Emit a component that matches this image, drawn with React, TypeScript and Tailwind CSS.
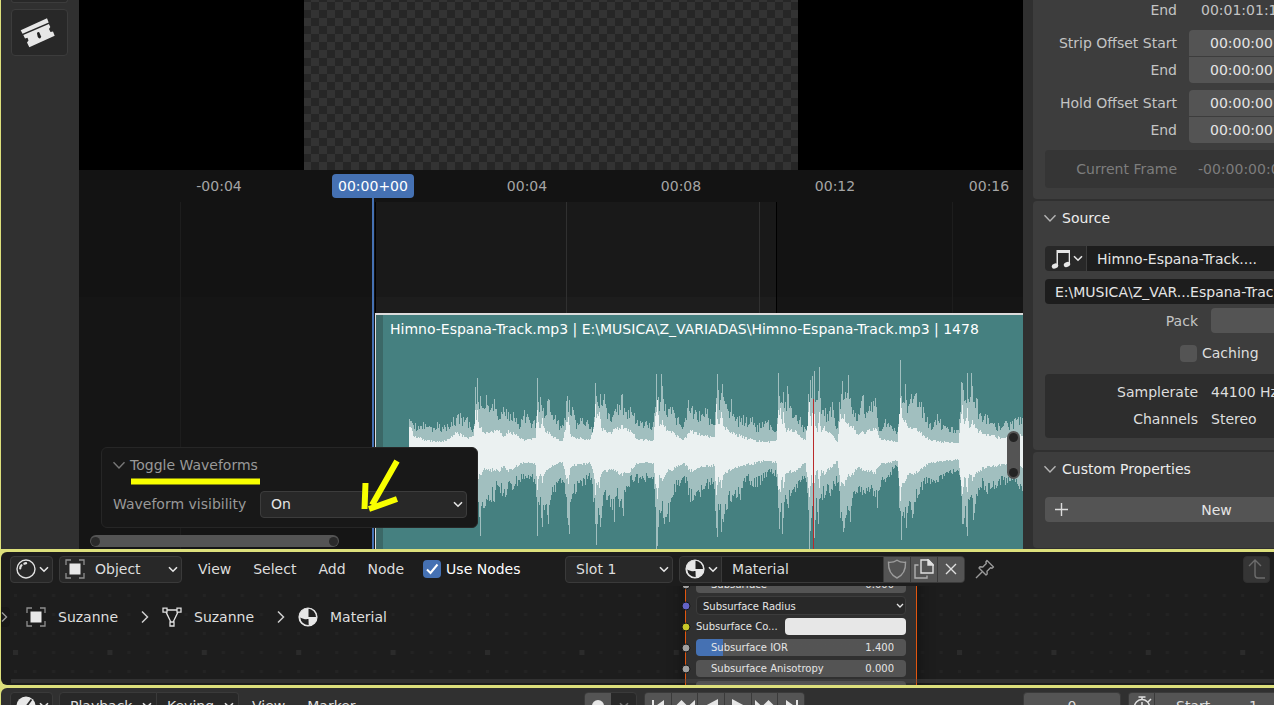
import type { ReactNode } from 'react';
import { clsx } from 'clsx';

type Point = [number, number];

// envelope control points: [pixel offset in the strip, height from the centre line]
const OUTER_UP: Point[] = [
    [34, 33], [38, 27], [48, 30], [55, 25], [62, 30], [70, 25], [78, 35], [83, 38], [92, 35], [97, 20], [99, 28], [100, 65], [101, 48], [102, 74],
    [103, 50], [105, 56], [107, 44], [111, 57], [113, 46], [117, 48], [119, 53], [123, 32], [128, 45], [138, 40], [143, 28], [149, 42], [157, 28],
    [161, 36], [162, 74], [163, 50], [165, 55], [168, 44], [173, 53], [180, 37], [187, 27], [192, 56], [194, 52], [197, 45], [200, 32], [207, 34],
    [212, 32], [218, 25], [219, 35], [220, 69], [221, 56], [222, 50], [225, 58], [227, 46], [229, 58], [231, 44], [238, 37], [247, 58], [249, 44],
    [255, 45], [262, 32], [270, 30], [278, 30], [280, 45], [281, 78], [283, 55], [285, 50], [286, 78], [287, 66], [288, 53], [298, 42], [303, 35],
    [308, 25], [313, 52], [320, 42], [332, 43], [338, 27], [340, 40], [342, 78], [343, 62], [345, 52], [347, 68], [350, 48], [355, 40], [356, 53],
    [358, 38], [362, 35], [377, 35], [382, 27], [393, 32], [400, 20], [402, 34], [403, 79], [404, 56], [406, 50], [408, 60], [410, 50], [412, 66],
    [415, 46], [425, 35], [430, 23], [432, 26], [433, 58], [435, 72], [436, 54], [437, 76], [438, 50], [439, 81], [440, 50], [442, 52], [444, 85],
    [445, 54], [447, 42], [450, 44], [452, 38], [457, 50], [459, 34], [462, 24], [464, 50], [466, 58], [467, 71], [468, 52], [470, 60], [473, 77],
    [475, 54], [478, 42], [483, 38], [488, 57], [491, 40], [496, 50], [500, 54], [502, 34], [503, 25], [510, 33], [515, 27], [522, 20], [524, 35],
    [525, 92], [526, 56], [528, 50], [530, 68], [531, 52], [536, 58], [540, 58], [544, 50], [548, 45], [557, 23], [562, 38], [568, 27], [582, 22],
    [585, 40], [586, 70], [588, 62], [590, 52], [592, 79], [594, 50], [596, 79], [597, 66], [599, 50], [602, 53], [604, 38], [610, 38], [618, 28],
    [635, 30], [643, 35], [647, 34], [648, 44],
];

const INNER_UP: Point[] = [
    [34, 25], [36, 24], [38, 16], [45, 15], [50, 12], [70, 11], [80, 20], [86, 18], [92, 14], [98, 16], [100, 42], [101, 32], [102, 42], [104, 24],
    [106, 25], [108, 20], [124, 22], [128, 15], [133, 22], [143, 16], [150, 12], [160, 14], [162, 42], [163, 30], [165, 24], [167, 34], [169, 24],
    [175, 18], [187, 11], [191, 30], [193, 35], [195, 18], [198, 15], [215, 13], [219, 30], [220, 48], [221, 34], [224, 40], [226, 24], [235, 20],
    [247, 27], [255, 22], [262, 13], [278, 12], [280, 36], [282, 52], [284, 26], [287, 32], [292, 22], [298, 20], [308, 12], [315, 22], [330, 17],
    [339, 15], [341, 48], [343, 28], [346, 40], [348, 26], [356, 20], [370, 15], [390, 10], [401, 12], [403, 42], [405, 44], [407, 28], [408, 40],
    [410, 24], [420, 22], [430, 12], [433, 40], [434, 50], [436, 26], [438, 50], [440, 26], [442, 20], [444, 40], [446, 20], [449, 26], [456, 18],
    [462, 10], [465, 38], [467, 34], [469, 38], [472, 28], [478, 26], [482, 18], [492, 22], [500, 24], [505, 14], [522, 10], [524, 38], [525, 54],
    [527, 34], [530, 32], [532, 26], [540, 24], [555, 12], [583, 9], [586, 38], [587, 47], [589, 28], [592, 44], [594, 24], [597, 32], [600, 24],
    [610, 18], [630, 14], [648, 18],
];

const OUTER_DOWN: Point[] = [
    [34, 28], [98, 30], [103, 50], [105, 84], [106, 54], [109, 56], [115, 48], [119, 50], [120, 38], [130, 45], [137, 38], [145, 30], [158, 30],
    [161, 45], [162, 84], [163, 50], [166, 66], [167, 75], [169, 58], [173, 72], [175, 48], [180, 40], [187, 28], [190, 42], [192, 66], [194, 82],
    [195, 50], [200, 42], [215, 28], [218, 50], [221, 93], [223, 56], [225, 75], [227, 54], [232, 48], [237, 58], [239, 70], [241, 44], [248, 64],
    [250, 40], [258, 30], [270, 30], [278, 25], [280, 55], [281, 98], [282, 94], [284, 58], [289, 72], [294, 70], [296, 46], [300, 40], [308, 25],
    [315, 50], [325, 45], [338, 30], [341, 76], [342, 85], [344, 58], [346, 80], [348, 70], [351, 58], [356, 50], [365, 48], [370, 30], [382, 35],
    [395, 20], [401, 25], [404, 77], [405, 60], [407, 82], [409, 50], [413, 56], [415, 44], [420, 40], [425, 30], [431, 30], [434, 98], [436, 66],
    [438, 70], [439, 86], [441, 46], [443, 72], [445, 46], [455, 44], [460, 34], [463, 30], [465, 66], [468, 80], [470, 66], [473, 58], [475, 70],
    [477, 46], [480, 42], [490, 42], [498, 44], [502, 56], [504, 38], [510, 30], [522, 15], [524, 56], [526, 88], [528, 60], [531, 76], [533, 54],
    [537, 66], [540, 50], [550, 32], [562, 30], [580, 20], [585, 28], [587, 72], [589, 66], [592, 84], [594, 48], [598, 68], [600, 52], [605, 35],
    [612, 42], [625, 33], [640, 30], [648, 42],
];

const INNER_DOWN: Point[] = INNER_UP.map(([x, h]) => [x, Math.round(h * 0.9)]);

const noise = (n: number) => {
    const v = Math.sin(n * 127.1) * 43758.5453;
    return v - Math.floor(v);
};

// control points are kept as they are, columns between them get some noise
const heightAt = (points: Point[], x: number, seed: number, jitter: number) => {
    const i = points.findIndex(([px]) => px >= x);
    if (i <= 0 || points[i][0] === x) return points[Math.max(i, 0)][1];
    const [x0, h0] = points[i - 1];
    const [x1, h1] = points[i];
    const h = h0 + ((h1 - h0) * (x - x0)) / (x1 - x0);
    return h * (1.05 - noise(x + seed) * jitter);
};

const CENTER = 139;

const wavePath = (up: Point[], down: Point[], jitter: number) => {
    let d = '';
    for (let x = 34; x < 648; x++) {
        const top = Math.round(CENTER - heightAt(up, x, 0, jitter));
        const bottom = Math.round(CENTER + heightAt(down, x, 900, jitter));
        d += `M${x} ${top}h1V${bottom}h-1z`;
    }
    return d;
};

const Waveform = () => (
    <svg width="648" height="236" viewBox="0 0 648 236" shapeRendering="crispEdges" className="block">
        <path d={wavePath(OUTER_UP, OUTER_DOWN, 0.34)} fill="#a1bfbf" />
        <path d={wavePath(INNER_UP, INNER_DOWN, 0.2)} fill="#ebf1f1" />
        <path d="M438 86h1v150h-1z" fill="#b92a2a" />
    </svg>
);

const Chevron = ({ className = '' }: { className?: string }) => (
    <svg width="10" height="7" viewBox="0 0 10 7" fill="none" stroke="#e5e5e5" strokeWidth="1.6" className={clsx('pointer-events-none', className)}>
        <path d="M1 1.2 5 5.2 9 1.2" />
    </svg>
);

const PanelArrow = ({ stroke }: { stroke: string }) => (
    <svg width="14" height="9" viewBox="0 0 14 9" fill="none" stroke={stroke} strokeWidth="1.4">
        <path d="M1.5 1.2 7 7 12.5 1.2" />
    </svg>
);

const BreadcrumbArrow = () => (
    <svg width="8" height="14" viewBox="0 0 8 14" fill="none" stroke="#cfcfcf" strokeWidth="1.5">
        <path d="M1 1.5 6.5 7 1 12.5" />
    </svg>
);

const BladeIcon = () => (
    <svg width="36" height="32" viewBox="0 0 36 32" fill="#e6e6e6">
        <path d="M.7 13.300 27 1.300 28.700 5.600 2.500 16.700z" />
        <path d="M3.300 18 28.900 7 30.300 10 29 12 30.500 15 33 14.500 34.700 18.700 9.300 30.200 7 25.500 8.500 23.500 7.500 20.800 5 21.500z" />
        <path d="M17 16.200q.6-1.600 2.200-1l1.800 4q.2 2.200-1.500 2.200-1.300-.2-1.800-1.600z" fill="#202020" />
    </svg>
);

const ObjectIcon = () => (
    <svg width="20" height="20" viewBox="0 0 20 20">
        <path d="M1 6V1h5M14 1h5v5M19 14v5h-5M6 19H1v-5" fill="none" stroke="#8f8f8f" strokeWidth="1.3" />
        <path d="M4.5 4.5h11v11h-11z" fill="#e8e8e8" />
    </svg>
);

const MeshIcon = () => (
    <svg width="20" height="20" viewBox="0 0 20 20" fill="none" stroke="#e0e0e0" strokeWidth="1.3">
        <path d="M1 1.2h4v4H1zM15 1.2h4v4h-4zM8 15h4v4H8zM5 3h10M4.2 5.4 8.8 15M15.8 5.4 11.2 15" />
    </svg>
);

const MaterialIcon = () => (
    <svg width="20" height="20" viewBox="0 0 20 20">
        <circle cx="10" cy="10" r="9" fill="#e8e8e8" />
        <path d="M10.5 1.8V10H18a8 8 0 0 0-7.500-8.200zM2.300 10.500c2.600 1.700 5.400 1.900 8.200 1.600l.2 6a8 8 0 0 1-8.400-7.600z" fill="#222" />
        <circle cx="10" cy="10" r="9" fill="none" stroke="#e8e8e8" strokeWidth="1.2" />
    </svg>
);

const ShaderIcon = () => (
    <svg width="20" height="20" viewBox="0 0 20 20" fill="none" stroke="#e0e0e0" strokeWidth="1.4">
        <circle cx="10" cy="10" r="9" />
        <path d="M4.200 9.500Q4.200 7.500 5.500 6.200" strokeWidth="2.200" strokeLinecap="round" />
        <path d="M8.500 4.600 10 4.200" strokeWidth="2.400" strokeLinecap="round" />
    </svg>
);

const ClockIcon = () => (
    <svg width="20" height="20" viewBox="0 0 20 20">
        <circle cx="10" cy="10" r="9.500" fill="#e8e8e8" />
        <path d="M15.500 3.500 10 11" stroke="#282828" strokeWidth="1.800" />
    </svg>
);

const MusicIcon = () => (
    <svg width="20" height="20" viewBox="0 0 20 20" fill="#e6e6e6">
        <path d="M5.500 1H19v14.500h-1.300V4H7V17H5.500z" />
        <ellipse cx="4" cy="17" rx="3.300" ry="2.500" transform="rotate(-20 4 17)" />
        <ellipse cx="16" cy="15.500" rx="3.300" ry="2.500" transform="rotate(-20 16 15.500)" />
    </svg>
);

const ShieldIcon = () => (
    <svg width="20" height="20" viewBox="0 0 20 20" fill="none" stroke="#9c9c9c" strokeWidth="1.400">
        <path d="M10 1.200C7.500 3 4.500 3.500 1.500 3.300 1.200 10 2.500 15.500 10 19 17.500 15.500 18.800 10 18.500 3.300 15.500 3.500 12.500 3 10 1.200z" />
    </svg>
);

const CopyIcon = () => (
    <svg width="20" height="20" viewBox="0 0 20 20" fill="none" stroke="#e0e0e0" strokeWidth="1.400">
        <path d="M14.500 1H7v13h12V5.500z" />
        <path d="M14 1v5h5z" fill="#e0e0e0" />
        <path d="M4.500 6H1v13h12v-2.500" stroke="#b0b0b0" />
    </svg>
);

const CloseIcon = () => (
    <svg width="12" height="12" viewBox="0 0 12 12" fill="none" stroke="#dedede" strokeWidth="1.400">
        <path d="M1 1l10 10M11 1 1 11" />
    </svg>
);

const PinIcon = () => (
    <svg width="20" height="20" viewBox="0 0 20 20" fill="none" stroke="#9a9a9a" strokeWidth="1.400" strokeLinejoin="round">
        <path d="M12 1.500 18.500 8 17 9.200 15.500 8.800 12 12.300 12.200 15 11 16 4 9 5 7.800 7.800 8 11.300 4.600 10.900 3zM7.500 12.500 1 19" />
    </svg>
);

const ParentIcon = () => (
    <svg width="20" height="22" viewBox="0 0 20 22" fill="none" stroke="#6c6c6c" strokeWidth="1.400" className="shrink-0">
        <path d="M2 8 8 2l6 6M8 2v15q0 3 3 3h7" />
    </svg>
);

const PlusIcon = () => (
    <svg width="13" height="13" viewBox="0 0 13 13" stroke="#dcdcdc" strokeWidth="1.400">
        <path d="M6.500 0v13M0 6.500h13" />
    </svg>
);

const StopwatchIcon = () => (
    <svg width="20" height="20" viewBox="0 0 20 20" fill="none" stroke="#e0e0e0" strokeWidth="1.500">
        <circle cx="10" cy="11" r="7.500" />
        <path d="M6.500 1h7M10 1v3M10 6v5M16 6l3-3" />
    </svg>
);

const ANNOTATION = '#f8ff00';

type FieldProps = { id: string; label: string; value: string; className?: string };

const TimeField = ({ id, label, value, className }: FieldProps) => (
    <div className="flex h-[26px] items-center gap-3">
        <label htmlFor={id} className="w-[144px] text-right text-[#c4c4c4]">{label}</label>
        <input
            id={id}
            defaultValue={value}
            className={clsx('h-full min-w-0 flex-1 bg-[#545454] pl-[21px] text-[#e5e5e5]', className)}
        />
    </div>
);

const PanelTitle = ({ children }: { children: ReactNode }) => (
    <button className="flex h-[34px] items-center gap-[5px] pl-[10px] text-[#ececec]">
        <PanelArrow stroke="#b5b5b5" />
        {children}
    </button>
);

const Sidebar = () => (
    <aside className="w-[251px] shrink-0 overflow-hidden bg-[#303030] pl-[10px]">
        <div className="flex h-full w-[368px] flex-col gap-[2px]">
            <section className="h-[199px] rounded-bl bg-[#3d3d3d]">
                <div className="flex h-5 items-center gap-6">
                    <span className="w-[144px] text-right text-[#c4c4c4]">End</span>
                    <span className="text-[#c4c4c4]">00:01:01:12</span>
                </div>
                <div className="mt-[10px] flex flex-col gap-px">
                    <TimeField id="strip-start" label="Strip Offset Start" value="00:00:00+00" className="rounded-tl" />
                    <TimeField id="strip-end" label="End" value="00:00:00+00" className="rounded-bl" />
                </div>
                <div className="mt-[7px] flex flex-col gap-px">
                    <TimeField id="hold-start" label="Hold Offset Start" value="00:00:00+00" className="rounded-tl" />
                    <TimeField id="hold-end" label="End" value="00:00:00+00" className="rounded-bl" />
                </div>
                <div className="mt-[7px] ml-3 flex h-[38px] items-center gap-[21px] rounded bg-[#353535] text-[#7d7d7d]">
                    <span className="w-[132px] text-right">Current Frame</span>
                    <span>-00:00:00:01</span>
                </div>
            </section>

            <section className="h-[249px] rounded-l bg-[#3d3d3d]">
                <PanelTitle>Source</PanelTitle>
                <div className="mt-[11px] ml-3 flex h-[25px] overflow-hidden rounded">
                    <button aria-label="Browse sound" className="flex w-[41px] items-center gap-[2px] bg-[#282828] pl-[6px]">
                        <MusicIcon />
                        <Chevron />
                    </button>
                    <input aria-label="Sound name" defaultValue="Himno-Espana-Track...." className="ml-px min-w-0 flex-1 bg-[#1d1d1d] pl-[10px] text-[#e5e5e5]" />
                </div>
                <div className="mt-2 ml-3 flex h-[25px] overflow-hidden rounded">
                    <input aria-label="File path" defaultValue="E:\MUSICA\Z_VAR...Espana-Track.mp3" className="min-w-0 flex-1 bg-[#1d1d1d] pl-[10px] text-[#e5e5e5]" />
                </div>
                <div className="mt-1 flex h-[25px] items-center gap-[13px]">
                    <span className="w-[165px] text-right text-[#c4c4c4]">Pack</span>
                    <button aria-label="Pack" className="h-full flex-1 rounded bg-[#545454]" />
                </div>
                <label className="mt-[7px] ml-[147px] flex h-[26px] items-center gap-[5px] text-[#dedede]">
                    <input type="checkbox" className="h-[17px] w-[17px] appearance-none rounded-sm bg-[#545454]" />
                    Caching
                </label>
                <dl className="mt-2 ml-3 grid h-16 grid-cols-[153px_1fr] content-center gap-x-[13px] rounded bg-[#2d2d2d] text-[#dedede]">
                    <dt className="text-right leading-[27px]">Samplerate</dt>
                    <dd className="leading-[27px]">44100 Hz</dd>
                    <dt className="text-right leading-[27px]">Channels</dt>
                    <dd className="leading-[27px]">Stereo</dd>
                </dl>
            </section>

            <section className="h-24 rounded-l bg-[#3d3d3d]">
                <PanelTitle>Custom Properties</PanelTitle>
                <button className="mt-[11px] ml-3 flex h-[25px] w-[344px] items-center rounded bg-[#545454] pl-[10px] text-[#e5e5e5]">
                    <PlusIcon />
                    <span className="flex-1 pr-6 text-center">New</span>
                </button>
            </section>
        </div>
    </aside>
);

const RULER = ['-00:04', '00:00+00', '00:04', '00:08', '00:12', '00:16'];

const OperatorPanel = () => (
    <div className="absolute top-[277px] left-[22px] h-[81px] w-[377px] rounded-md border border-[#262626] bg-[#181818] px-[10px] text-[#999]">
        <button className="flex h-[34px] items-center gap-1">
            <PanelArrow stroke="#777" />
            Toggle Waveforms
        </button>
        <div className="flex h-11 items-center justify-between pl-px">
            <label htmlFor="visibility">Waveform visibility</label>
            <div className="relative flex h-[27px] w-[207px] items-center">
                <select id="visibility" className="h-full w-full appearance-none rounded border border-[#3c3c3c] bg-[#282828] pl-[10px] text-[#e5e5e5]">
                    <option>On</option>
                    <option>Off</option>
                </select>
                <Chevron className="absolute right-1" />
            </div>
        </div>
        <svg width="280" height="60" viewBox="0 0 280 60" className="pointer-events-none absolute top-[8px] left-[28px]" fill="none" stroke={ANNOTATION} strokeWidth="6">
            <path d="M1 25.500h129" />
            <path d="M267 5 242 49M235.500 27 234.500 53M239 53 267 43" />
        </svg>
    </div>
);

const Timeline = () => (
    <div className="relative h-[379px] shrink-0 overflow-hidden bg-[#131313]">
        <div className="flex h-8 items-center pl-[63px] text-[#a5a5a5]">
            {RULER.map((time) => (
                <div key={time} className="flex w-[154px] shrink-0 justify-center">
                    <span className={clsx(time === '00:00+00' && 'z-10 rounded bg-[#4571b3] px-[6px] leading-6 text-white')}>{time}</span>
                </div>
            ))}
        </div>

        {/* channels and the frame range */}
        <div className="absolute inset-x-0 top-[127px] bottom-0 bg-[#151515]" />
        <div className="absolute top-8 bottom-0 left-[296px] w-[402px] border-x border-black bg-[#191919]">
            <div className="mt-[95px] h-full bg-[#1d1d1d]" />
        </div>
        <div className="absolute top-8 bottom-0 left-[101px] w-px bg-[#1d1d1d]" />
        <div className="absolute top-8 bottom-0 left-[487px] w-px bg-[#303030]" />
        <div className="absolute top-8 bottom-0 left-[680px] w-px bg-[#303030]" />
        <div className="absolute top-8 bottom-0 left-[873px] w-px bg-[#1d1d1d]" />

        {/* sound strip */}
        <div className="absolute top-[143px] right-0 bottom-0 left-[296px] overflow-hidden border-t-2 border-l border-[#dcdcdc] bg-[#458080]">
            <div className="absolute inset-y-0 left-0 w-[7px] bg-[#3b6867]" />
            <div className="absolute -top-[2px] -left-px">
                <Waveform />
            </div>
            <p className="relative pt-[3px] pl-[14px] leading-[22px] whitespace-nowrap text-white">
                Himno-Espana-Track.mp3 | E:\MUSICA\Z_VARIADAS\Himno-Espana-Track.mp3 | 1478
            </p>
        </div>
        <div className="absolute top-7 bottom-0 left-[293px] w-[2px] bg-[#4571b3]" />

        <div className="absolute top-[261px] right-[3px] flex h-12 w-[13px] flex-col justify-between rounded-full bg-[#545454] p-[2px]">
            <span className="h-[9px] rounded-full bg-[#242424]" />
            <span className="h-[9px] rounded-full bg-[#242424]" />
        </div>
        <div className="absolute bottom-[2px] left-[11px] flex h-3 w-[249px] items-center justify-between rounded-full bg-[#545454] px-px">
            <span className="h-[9px] w-[9px] rounded-full bg-[#2a2a2a]" />
            <span className="h-[9px] w-[9px] rounded-full bg-[#2a2a2a]" />
        </div>
        <OperatorPanel />
    </div>
);

const Sequencer = () => (
    <div className="flex min-h-0 flex-1">
        <nav className="w-[78px] shrink-0 bg-[#303030] pl-[10px]">
            <div className="h-[3px] w-[57px] rounded-b border border-t-0 border-[#3c3c3c] bg-[#282828]" />
            <button aria-label="Blade" className="mt-[6px] flex h-[47px] w-[57px] items-center justify-center rounded border border-[#3c3c3c] bg-[#282828] pr-1">
                <BladeIcon />
            </button>
        </nav>
        <main className="flex min-w-0 flex-1 flex-col">
            <div className="flex min-h-0 flex-1 justify-center bg-black">
                <div className="w-[494px] bg-[repeating-conic-gradient(#262626_0_25%,#333333_0_50%)] bg-size-[16px_16px] bg-position-[7px_10px]" />
            </div>
            <Timeline />
        </main>
        <Sidebar />
    </div>
);

const Box = ({ label, className, children }: { label: string; className: string; children: ReactNode }) => (
    <button aria-label={label} className={clsx('flex h-[27px] shrink-0 items-center rounded border border-[#3a3a3a] bg-[#282828]', className)}>
        {children}
    </button>
);

const NodeGrid = () => (
    <svg width="100%" height="99" className="absolute inset-0">
        <defs>
            <pattern id="grid" x="12" y="8" width="94.4" height="95" patternUnits="userSpaceOnUse">
                {[0, 1, 2, 3, 4].map((row) =>
                    [0, 1, 2, 3, 4].map((col) => <path key={`${row}-${col}`} d={`M${Math.round(col * 18.9) + 1} ${row * 19}h3v3h-3z`} fill="#232323" />)
                )}
                <path d="M0 56h5v5H0z" fill="#2b2b2b" />
            </pattern>
        </defs>
        <rect width="100%" height="99" fill="url(#grid)" />
    </svg>
);

const Socket = ({ color }: { color: string }) => (
    <svg width="10" height="10" viewBox="0 0 10 10" className="absolute -left-[5px]">
        <circle cx="5" cy="5" r="4" fill={color} stroke="#151515" />
    </svg>
);

const NodeRow = ({ color, children }: { color: string; children: ReactNode }) => (
    <div className="relative flex h-[21px] items-center pr-[10px] pl-[10px]">
        <Socket color={color} />
        {children}
    </div>
);

const NodeValue = ({ label, value, fill }: { label: string; value: string; fill?: boolean }) => (
    <div className={clsx('flex h-[17px] w-full items-center justify-between rounded-sm pr-3 pl-[15px]', fill ? 'bg-linear-to-r from-[#4571b3] from-13% to-[#545454] to-13%' : 'bg-[#545454]')}>
        <label htmlFor={label}>{label}</label>
        <input id={label} defaultValue={value} className="w-12 bg-transparent text-right" />
    </div>
);

const ShaderNode = () => (
    <div className="absolute -top-[12px] left-[684px] w-[232px] border-x border-[#e2560f] bg-[#303030] text-[10px] text-[#e5e5e5] shadow-[0_0_10px_4px_#161616]">
        <NodeRow color="#a1a1a1"><NodeValue label="Subsurface" value="0.000" /></NodeRow>
        <NodeRow color="#6363c7">
            <select aria-label="Subsurface Radius" className="h-[19px] w-full appearance-none rounded-sm border border-[#3c3c3c] bg-[#282828] pl-[6px]">
                <option>Subsurface Radius</option>
            </select>
            <svg width="8" height="6" viewBox="0 0 8 6" fill="none" stroke="#e5e5e5" strokeWidth="1.300" className="pointer-events-none absolute right-3">
                <path d="M1 1 4 4 7 1" />
            </svg>
        </NodeRow>
        <NodeRow color="#c7c729">
            <span className="flex-1">Subsurface Co...</span>
            <button aria-label="Subsurface Color" className="h-[17px] w-[121px] rounded-sm bg-[#e7e7e7]" />
        </NodeRow>
        <NodeRow color="#a1a1a1"><NodeValue label="Subsurface IOR" value="1.400" fill /></NodeRow>
        <NodeRow color="#a1a1a1"><NodeValue label="Subsurface Anisotropy" value="0.000" /></NodeRow>
        <NodeRow color="#a1a1a1"><NodeValue label="Metallic" value="0.000" /></NodeRow>
    </div>
);

const NodeEditor = () => (
    <div className="flex h-[133px] shrink-0 flex-col overflow-hidden rounded-l-md bg-[#1d1d1d] text-[#dedede]">
        <header className="flex h-[34px] shrink-0 items-center pr-1 pl-[9px]">
            <Box label="Editor type" className="w-[43px] gap-[3px] pl-[5px]"><ShaderIcon /><Chevron /></Box>
            <div className="relative ml-[6px] flex h-[27px] w-[123px] items-center">
                <select aria-label="Shader type" className="h-full w-full appearance-none rounded border border-[#3a3a3a] bg-[#282828] pl-[35px]">
                    <option>Object</option>
                </select>
                <span className="pointer-events-none absolute left-[6px]"><ObjectIcon /></span>
                <Chevron className="absolute right-1" />
            </div>
            <nav className="ml-4 flex gap-[22px]">
                <button>View</button>
                <button>Select</button>
                <button>Add</button>
                <button>Node</button>
            </nav>
            <label className="ml-[19px] flex w-[142px] shrink-0 items-center gap-[5px] text-white">
                <span className="relative flex">
                    <input type="checkbox" defaultChecked className="h-[18px] w-[18px] appearance-none rounded-sm bg-[#4571b3]" />
                    <svg width="18" height="18" viewBox="0 0 18 18" fill="none" stroke="#fff" strokeWidth="2" className="pointer-events-none absolute inset-0">
                        <path d="M4 9.500 7.500 13 14.500 4.500" />
                    </svg>
                </span>
                Use Nodes
            </label>
            <div className="relative flex h-[27px] w-[108px] shrink-0 items-center">
                <select aria-label="Slot" className="h-full w-full appearance-none rounded border border-[#3a3a3a] bg-[#282828] pl-[10px]">
                    <option>Slot 1</option>
                </select>
                <Chevron className="absolute right-1" />
            </div>
            <div className="ml-[6px] flex h-[27px] w-[286px] shrink-0 gap-px overflow-hidden rounded border border-[#3a3a3a] bg-[#3a3a3a]">
                <button aria-label="Browse material" className="flex w-[41px] items-center gap-[3px] bg-[#282828] pl-[5px]"><MaterialIcon /><Chevron /></button>
                <input aria-label="Material name" defaultValue="Material" className="min-w-0 flex-1 bg-[#1d1d1d] pl-[10px]" />
                <button aria-label="Fake user" className="flex w-[26px] items-center justify-center bg-[#545454]"><ShieldIcon /></button>
                <button aria-label="New material" className="flex w-[26px] items-center justify-center bg-[#545454]"><CopyIcon /></button>
                <button aria-label="Unlink" className="flex w-[26px] items-center justify-center bg-[#545454]"><CloseIcon /></button>
            </div>
            <button aria-label="Pin" className="ml-[10px]"><PinIcon /></button>
            <button aria-label="Parent node tree" className="ml-auto flex h-[27px] w-[27px] items-center justify-center rounded border border-[#303030] bg-[#353535]"><ParentIcon /></button>
        </header>
        <div className="relative flex-1 overflow-hidden">
            <NodeGrid />
            <ShaderNode />
            <div className="absolute inset-x-0 bottom-[2px] ml-[10px] h-1 bg-[#505050]/40" />
            <div className="relative flex h-[62px] w-[400px] items-center">
                <svg width="9" height="26" viewBox="0 0 9 26" className="shrink-0">
                    <path d="M0 3h4q5 0 5 5v10q0 5-5 5H0z" fill="#191919" />
                    <path d="M1 8.500 5.500 13 1 17.500" fill="none" stroke="#9a9a9a" strokeWidth="1.400" />
                </svg>
                <div className="ml-4 flex w-[115px] items-center gap-3"><ObjectIcon />Suzanne</div>
                <BreadcrumbArrow />
                <div className="ml-[13px] flex w-[115px] items-center gap-3"><MeshIcon />Suzanne</div>
                <BreadcrumbArrow />
                <div className="ml-[13px] flex items-center gap-3"><MaterialIcon />Material</div>
            </div>
        </div>
    </div>
);

const TRANSPORT = [
    { label: 'Jump to start', path: 'M4 4h2v13H4zM16 4v13L7 10.500z' },
    { label: 'Previous keyframe', path: 'M0 10.500 6.500 4 13 10.500 6.500 17zM20 4v13l-7-6.500z' },
    { label: 'Play reversed', path: 'M17 3v15L3 10.500z' },
    { label: 'Play', path: 'M4 3v15l14-7.500z' },
    { label: 'Next keyframe', path: 'M20 10.500 13.500 4 7 10.500 13.500 17zM0 4v13l7-6.500z' },
    { label: 'Jump to end', path: 'M15 4h2v13h-2zM5 4v13l9-6.500z' },
];

const TimelineHeader = () => (
    <footer className="flex h-[17px] shrink-0 items-start overflow-hidden rounded-tl-md bg-[#303030] pt-1 pl-[9px] text-[#dedede]">
        <Box label="Editor type" className="w-[43px] gap-[3px] pl-[5px]"><ClockIcon /><Chevron /></Box>
        <Box label="Playback" className="ml-[6px] w-[98px] justify-between rounded-r-none pr-1 pl-[10px]">Playback<Chevron /></Box>
        <Box label="Keying" className="w-[82px] justify-between rounded-l-none border-l-0 pr-1 pl-[10px]">Keying<Chevron /></Box>
        <button className="ml-[13px] h-[27px]">View</button>
        <button className="ml-[22px] h-[27px]">Marker</button>
        <div className="ml-auto flex h-[27px] w-[53px] shrink-0 overflow-hidden rounded border border-[#3a3a3a] bg-[#282828]">
            <button aria-label="Auto keying" className="flex w-[26px] items-center justify-center bg-[#545454]">
                <span className="h-3 w-3 rounded-full bg-[#e6e6e6]" />
            </button>
            <button aria-label="Keying mode" className="flex flex-1 items-center justify-center opacity-40"><Chevron /></button>
        </div>
        <div className="ml-[7px] flex h-[27px] w-[161px] shrink-0 gap-px overflow-hidden rounded border border-[#3a3a3a] bg-[#3a3a3a]">
            {TRANSPORT.map(({ label, path }) => (
                <button key={label} aria-label={label} className="flex flex-1 items-center justify-center bg-[#545454]">
                    <svg width="20" height="20" viewBox="0 0 20 20" fill="#e6e6e6" className="shrink-0"><path d={path} /></svg>
                </button>
            ))}
        </div>
        <input aria-label="Current frame" defaultValue="0" className="ml-[218px] h-[27px] w-[98px] shrink-0 rounded border border-[#3a3a3a] bg-[#545454] text-center" />
        <div className="ml-[7px] flex h-[27px] w-[146px] shrink-0 gap-px overflow-hidden rounded-l border border-r-0 border-[#3a3a3a] bg-[#3a3a3a]">
            <button aria-label="Preview range" className="flex w-[25px] items-center justify-center bg-[#545454]"><StopwatchIcon /></button>
            <div className="flex flex-1 items-center justify-between bg-[#545454] pr-4 pl-[21px]">
                <label htmlFor="start-frame">Start</label>
                <input id="start-frame" defaultValue="1" className="w-8 bg-transparent text-right" />
            </div>
        </div>
    </footer>
);

const App = () => (
    <div className="flex h-screen flex-col gap-[3px] overflow-hidden bg-[#dde07c] pl-px font-['DejaVu_Sans',sans-serif] text-[14px] leading-5">
        <Sequencer />
        <NodeEditor />
        <TimelineHeader />
    </div>
);

export default App;
